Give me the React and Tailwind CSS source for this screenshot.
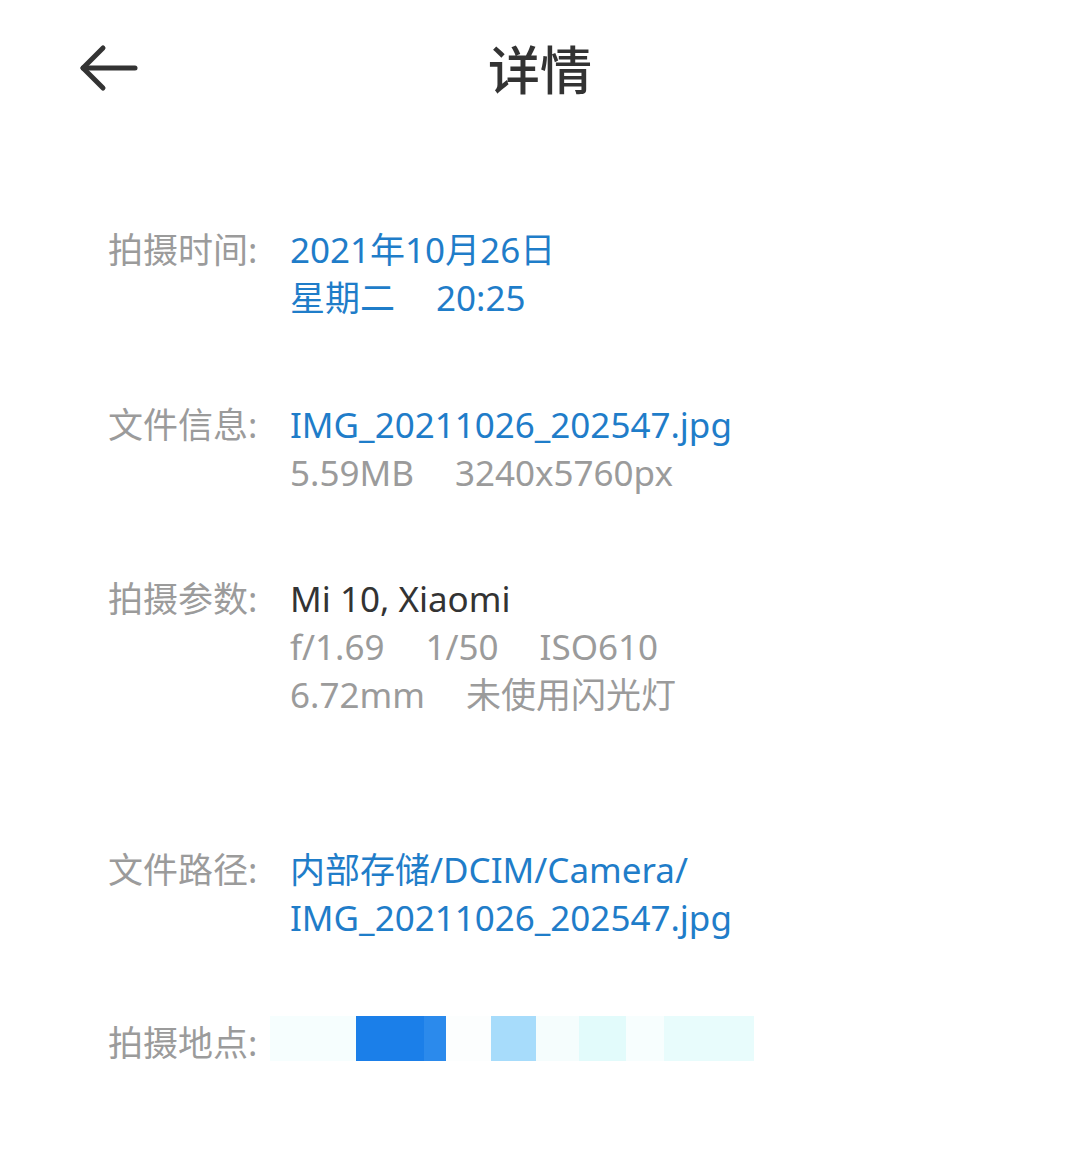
import React from "react";

const font = { fontFamily: '"Noto Sans", "Noto Sans CJK SC", sans-serif' };

function Row({ label, children, className = "" }) {
  return (
    <div className={"flex " + className}>
      <div className="w-[182px] shrink-0 text-[#9b9b9b]">{label}</div>
      <div className="flex flex-col">{children}</div>
    </div>
  );
}

function Parts({ items, color }) {
  return (
    <div className={"flex gap-[41px] " + color}>
      {items.map((t) => (
        <span key={t}>{t}</span>
      ))}
    </div>
  );
}

const mosaic = [
  ["w-[86px]", "bg-[#f6fefe]"],
  ["w-[68px]", "bg-[#1b7fe9]"],
  ["w-[22px]", "bg-[#2b8aec]"],
  ["w-[45px]", "bg-[#fcfefe]"],
  ["w-[45px]", "bg-[#a7dcfb]"],
  ["w-[43px]", "bg-[#f5fdfd]"],
  ["w-[47px]", "bg-[#e2fbfb]"],
  ["w-[38px]", "bg-[#f7fefe]"],
  ["w-[90px]", "bg-[#e8fcfc]"],
];

export default function App() {
  return (
    <div className="w-[1080px] h-[1165px] bg-white overflow-hidden" style={font}>
      <header className="relative h-[140px]">
        <button className="absolute left-[73px] top-[40px] p-1">
          <svg width="64" height="48" viewBox="0 0 64 48" fill="none" stroke="#333" strokeWidth="5" strokeLinecap="round" strokeLinejoin="round">
            <path d="M6 24 H58" />
            <path d="M26 4 L6 24 L26 44" />
          </svg>
        </button>
        <h1 className="pt-[34px] text-center text-[52px] leading-[72px] font-medium text-[#333]">详情</h1>
      </header>

      <main className="pl-[108px] pt-[86px] text-[35px] leading-[48px]">
        <Row label="拍摄时间:">
          <span className="text-[#1f7dc9]">2021年10月26日</span>
          <Parts color="text-[#1f7dc9]" items={["星期二", "20:25"]} />
        </Row>

        <Row label="文件信息:" className="mt-[79px]">
          <span className="text-[#1f7dc9]">IMG_20211026_202547.jpg</span>
          <Parts color="text-[#9b9b9b]" items={["5.59MB", "3240x5760px"]} />
        </Row>

        <Row label="拍摄参数:" className="mt-[78px]">
          <span className="text-[#333]">Mi 10, Xiaomi</span>
          <Parts color="text-[#9b9b9b]" items={["f/1.69", "1/50", "ISO610"]} />
          <Parts color="text-[#9b9b9b]" items={["6.72mm", "未使用闪光灯"]} />
        </Row>

        <Row label="文件路径:" className="mt-[127px]">
          <span className="text-[#1f7dc9]">内部存储/DCIM/Camera/</span>
          <span className="text-[#1f7dc9]">IMG_20211026_202547.jpg</span>
        </Row>

        <div className="flex items-start mt-[77px]">
          <div className="w-[162px] shrink-0 text-[#9b9b9b]">拍摄地点:</div>
          <div className="flex h-[45px] -mt-[3px]">
            {mosaic.map(([w, c], i) => (
              <div key={i} className={w + " h-full " + c} />
            ))}
          </div>
        </div>
      </main>
    </div>
  );
}
